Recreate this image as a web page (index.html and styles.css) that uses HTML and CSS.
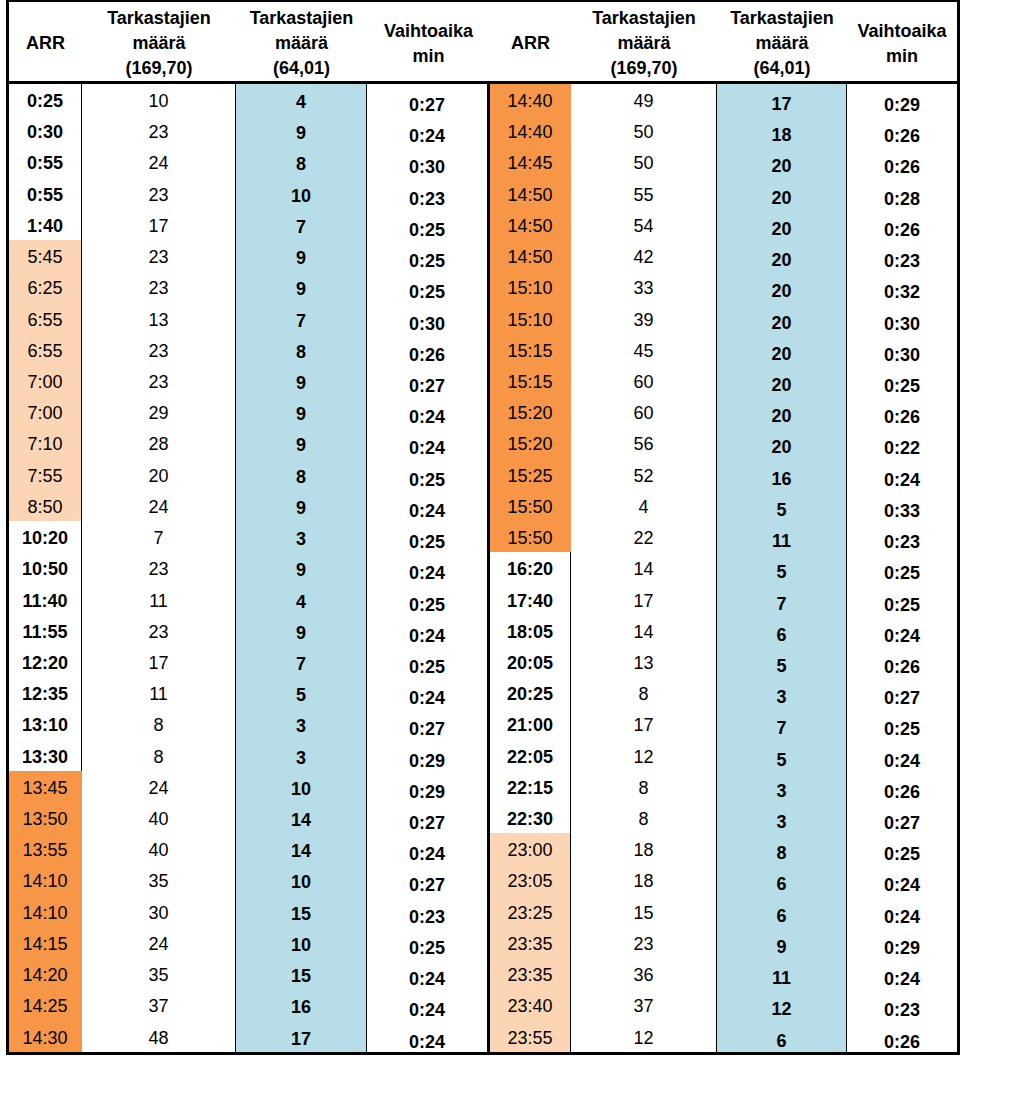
FILE: index.html
```html
<!DOCTYPE html>
<html lang="fi">
<head>
<meta charset="utf-8">
<title>Tarkastajat</title>
<link rel="stylesheet" href="styles.css">
</head>
<body>
<div class="sheet">
  <div class="h">ARR</div>
  <div class="h">Tarkastajien<br>määrä<br>(169,70)</div>
  <div class="h">Tarkastajien<br>määrä<br>(64,01)</div>
  <div class="h">Vaihtoaika<br>min</div>
  <div class="h">ARR</div>
  <div class="h">Tarkastajien<br>määrä<br>(169,70)</div>
  <div class="h">Tarkastajien<br>määrä<br>(64,01)</div>
  <div class="h">Vaihtoaika<br>min</div>

  <div class="c a">0:25</div><div class="c n">10</div><div class="c b">4</div><div class="c v s">0:27</div><div class="c a o">14:40</div><div class="c n">49</div><div class="c b b2">17</div><div class="c v e">0:29</div>
  <div class="c a">0:30</div><div class="c n">23</div><div class="c b">9</div><div class="c v s">0:24</div><div class="c a o">14:40</div><div class="c n">50</div><div class="c b b2">18</div><div class="c v e">0:26</div>
  <div class="c a">0:55</div><div class="c n">24</div><div class="c b">8</div><div class="c v s">0:30</div><div class="c a o">14:45</div><div class="c n">50</div><div class="c b b2">20</div><div class="c v e">0:26</div>
  <div class="c a">0:55</div><div class="c n">23</div><div class="c b">10</div><div class="c v s">0:23</div><div class="c a o">14:50</div><div class="c n">55</div><div class="c b b2">20</div><div class="c v e">0:28</div>
  <div class="c a">1:40</div><div class="c n">17</div><div class="c b">7</div><div class="c v s">0:25</div><div class="c a o">14:50</div><div class="c n">54</div><div class="c b b2">20</div><div class="c v e">0:26</div>
  <div class="c a p">5:45</div><div class="c n">23</div><div class="c b">9</div><div class="c v s">0:25</div><div class="c a o">14:50</div><div class="c n">42</div><div class="c b b2">20</div><div class="c v e">0:23</div>
  <div class="c a p">6:25</div><div class="c n">23</div><div class="c b">9</div><div class="c v s">0:25</div><div class="c a o">15:10</div><div class="c n">33</div><div class="c b b2">20</div><div class="c v e">0:32</div>
  <div class="c a p">6:55</div><div class="c n">13</div><div class="c b">7</div><div class="c v s">0:30</div><div class="c a o">15:10</div><div class="c n">39</div><div class="c b b2">20</div><div class="c v e">0:30</div>
  <div class="c a p">6:55</div><div class="c n">23</div><div class="c b">8</div><div class="c v s">0:26</div><div class="c a o">15:15</div><div class="c n">45</div><div class="c b b2">20</div><div class="c v e">0:30</div>
  <div class="c a p">7:00</div><div class="c n">23</div><div class="c b">9</div><div class="c v s">0:27</div><div class="c a o">15:15</div><div class="c n">60</div><div class="c b b2">20</div><div class="c v e">0:25</div>
  <div class="c a p">7:00</div><div class="c n">29</div><div class="c b">9</div><div class="c v s">0:24</div><div class="c a o">15:20</div><div class="c n">60</div><div class="c b b2">20</div><div class="c v e">0:26</div>
  <div class="c a p">7:10</div><div class="c n">28</div><div class="c b">9</div><div class="c v s">0:24</div><div class="c a o">15:20</div><div class="c n">56</div><div class="c b b2">20</div><div class="c v e">0:22</div>
  <div class="c a p">7:55</div><div class="c n">20</div><div class="c b">8</div><div class="c v s">0:25</div><div class="c a o">15:25</div><div class="c n">52</div><div class="c b b2">16</div><div class="c v e">0:24</div>
  <div class="c a p">8:50</div><div class="c n">24</div><div class="c b">9</div><div class="c v s">0:24</div><div class="c a o">15:50</div><div class="c n">4</div><div class="c b b2">5</div><div class="c v e">0:33</div>
  <div class="c a">10:20</div><div class="c n">7</div><div class="c b">3</div><div class="c v s">0:25</div><div class="c a o">15:50</div><div class="c n">22</div><div class="c b b2">11</div><div class="c v e">0:23</div>
  <div class="c a">10:50</div><div class="c n">23</div><div class="c b">9</div><div class="c v s">0:24</div><div class="c a">16:20</div><div class="c n">14</div><div class="c b b2">5</div><div class="c v e">0:25</div>
  <div class="c a">11:40</div><div class="c n">11</div><div class="c b">4</div><div class="c v s">0:25</div><div class="c a">17:40</div><div class="c n">17</div><div class="c b b2">7</div><div class="c v e">0:25</div>
  <div class="c a">11:55</div><div class="c n">23</div><div class="c b">9</div><div class="c v s">0:24</div><div class="c a">18:05</div><div class="c n">14</div><div class="c b b2">6</div><div class="c v e">0:24</div>
  <div class="c a">12:20</div><div class="c n">17</div><div class="c b">7</div><div class="c v s">0:25</div><div class="c a">20:05</div><div class="c n">13</div><div class="c b b2">5</div><div class="c v e">0:26</div>
  <div class="c a">12:35</div><div class="c n">11</div><div class="c b">5</div><div class="c v s">0:24</div><div class="c a">20:25</div><div class="c n">8</div><div class="c b b2">3</div><div class="c v e">0:27</div>
  <div class="c a">13:10</div><div class="c n">8</div><div class="c b">3</div><div class="c v s">0:27</div><div class="c a">21:00</div><div class="c n">17</div><div class="c b b2">7</div><div class="c v e">0:25</div>
  <div class="c a">13:30</div><div class="c n">8</div><div class="c b">3</div><div class="c v s">0:29</div><div class="c a">22:05</div><div class="c n">12</div><div class="c b b2">5</div><div class="c v e">0:24</div>
  <div class="c a o">13:45</div><div class="c n">24</div><div class="c b">10</div><div class="c v s">0:29</div><div class="c a">22:15</div><div class="c n">8</div><div class="c b b2">3</div><div class="c v e">0:26</div>
  <div class="c a o">13:50</div><div class="c n">40</div><div class="c b">14</div><div class="c v s">0:27</div><div class="c a">22:30</div><div class="c n">8</div><div class="c b b2">3</div><div class="c v e">0:27</div>
  <div class="c a o">13:55</div><div class="c n">40</div><div class="c b">14</div><div class="c v s">0:24</div><div class="c a p">23:00</div><div class="c n">18</div><div class="c b b2">8</div><div class="c v e">0:25</div>
  <div class="c a o">14:10</div><div class="c n">35</div><div class="c b">10</div><div class="c v s">0:27</div><div class="c a p">23:05</div><div class="c n">18</div><div class="c b b2">6</div><div class="c v e">0:24</div>
  <div class="c a o">14:10</div><div class="c n">30</div><div class="c b">15</div><div class="c v s">0:23</div><div class="c a p">23:25</div><div class="c n">15</div><div class="c b b2">6</div><div class="c v e">0:24</div>
  <div class="c a o">14:15</div><div class="c n">24</div><div class="c b">10</div><div class="c v s">0:25</div><div class="c a p">23:35</div><div class="c n">23</div><div class="c b b2">9</div><div class="c v e">0:29</div>
  <div class="c a o">14:20</div><div class="c n">35</div><div class="c b">15</div><div class="c v s">0:24</div><div class="c a p">23:35</div><div class="c n">36</div><div class="c b b2">11</div><div class="c v e">0:24</div>
  <div class="c a o">14:25</div><div class="c n">37</div><div class="c b">16</div><div class="c v s">0:24</div><div class="c a p">23:40</div><div class="c n">37</div><div class="c b b2">12</div><div class="c v e">0:23</div>
  <div class="c a o">14:30</div><div class="c n">48</div><div class="c b">17</div><div class="c v s">0:24</div><div class="c a p">23:55</div><div class="c n">12</div><div class="c b b2">6</div><div class="c v e">0:26</div>
</div>
</body>
</html>
```

FILE: styles.css
```css
html, body {
  margin: 0;
  padding: 0;
  background: #ffffff;
}

body {
  font-family: "Liberation Sans", Arial, sans-serif;
  color: #000000;
}

.sheet {
  display: grid;
  grid-template-columns: 73px 154px 131px 123px 81px 146px 130px 110px;
  grid-template-rows: 82px repeat(31, 31.22px);
  width: 948px;
  margin-left: 6px;
  border: 3px solid #000000;
  border-top-width: 2px;
  background: #ffffff;
}

.h {
  box-sizing: border-box;
  display: flex;
  align-items: center;
  justify-content: center;
  text-align: center;
  font-weight: bold;
  font-size: 18px;
  line-height: 25px;
  border-bottom: 3px solid #000000;
  padding-top: 4px;
}

.c {
  box-sizing: border-box;
  text-align: center;
  font-size: 18px;
  line-height: 31px;
  padding-top: 2px;
  border-right: 1px solid #000000;
  white-space: nowrap;
}

.a {
  font-weight: bold;
}

.a.p {
  font-weight: normal;
  background: #fcd5b4;
}

.a.o {
  font-weight: normal;
  background: #f79646;
  border-right-color: #f79646;
}

.n {
  font-weight: normal;
}

.b {
  font-weight: bold;
  background: #b7dee8;
  padding-top: 3px;
}

.b.b2 {
  padding-top: 5px;
}

.v {
  font-weight: bold;
  padding-top: 6px;
}

.v.s {
  border-right-width: 3px;
}

.v.e {
  border-right: none;
}
```
